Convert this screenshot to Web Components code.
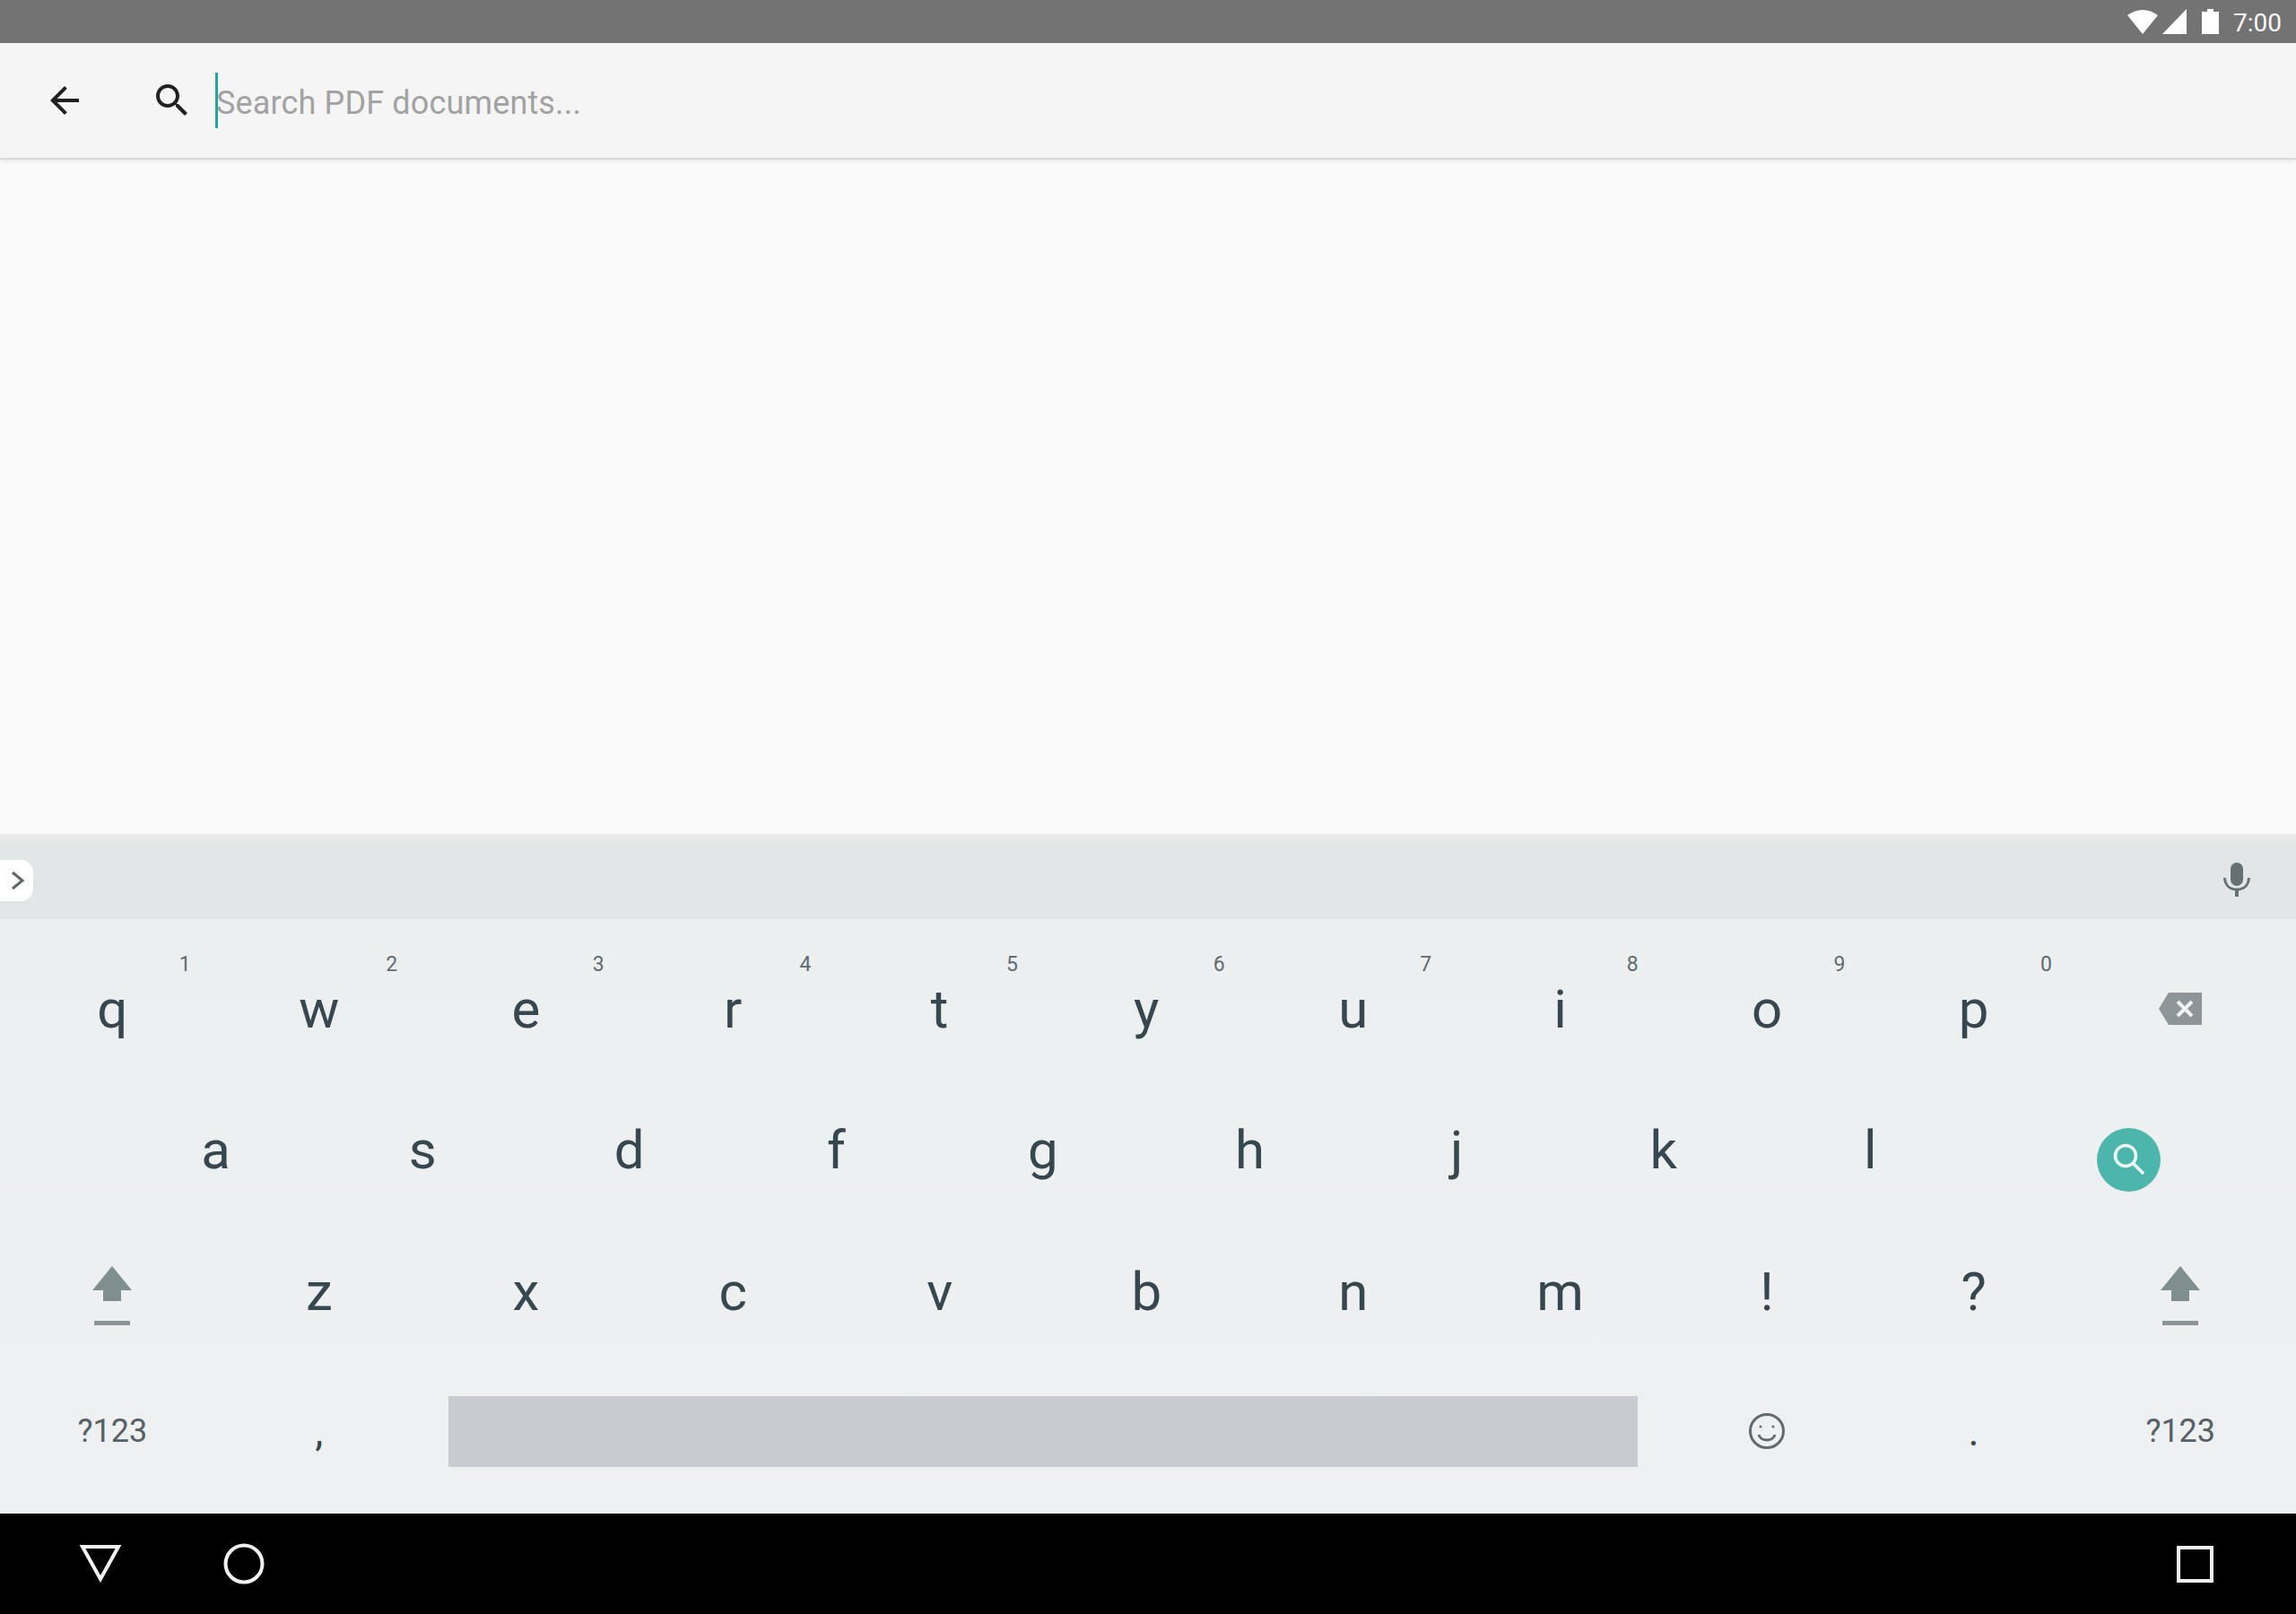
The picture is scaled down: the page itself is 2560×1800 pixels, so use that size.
<!DOCTYPE html>
<html lang="en">
<head>
<meta charset="utf-8">
<title>Search PDF documents</title>
<style>
  html, body { margin: 0; background: #fafafa; }
  body { font-family: Roboto, "Liberation Sans", sans-serif; }
</style>
</head>
<body>
<app-shell>
  <status-bar time="7:00"></status-bar>
  <search-bar placeholder="Search PDF documents..."></search-bar>
  <results-area></results-area>
  <soft-keyboard></soft-keyboard>
  <nav-bar></nav-bar>
</app-shell>

<script>
class AppShell extends HTMLElement {
    constructor() {
        super();
        this.attachShadow({ mode: 'open' });
        this.shadowRoot.innerHTML = `
            <style>
            :host { display: flex; flex-direction: column; width: 2560px; height: 1800px; background: #fafafa; overflow: hidden; }
            </style>
            <slot></slot>
        `;
    }
}

class ResultsArea extends HTMLElement {
    constructor() {
        super();
        this.attachShadow({ mode: 'open' });
        this.shadowRoot.innerHTML = `
            <style>
            :host { display: block; flex: 1; background: #fafafa; }
            </style>
            <slot></slot>
        `;
    }
}

class StatusBar extends HTMLElement {
    constructor() {
        super();
        this.attachShadow({ mode: 'open' });
        this.shadowRoot.innerHTML = `
            <style>
            :host { display: flex; align-items: center; justify-content: flex-end; height: 48px; flex: none; background: #737373; color: #fafafa; padding-right: 16px; box-sizing: border-box; }
            svg { display: block; fill: #fff; }
            .wifi { margin-right: 5px; }
            .signal { margin-right: 17px; }
            .battery { margin-right: 16px; }
            .time { font-size: 28px; line-height: 48px; padding-top: 3px; }
            </style>
            <svg class="wifi" width="34" height="30" viewBox="0 0 34 30"><path d="M0 8Q17 -4 34 8L17 29Z"/></svg>
            <svg class="signal" width="27" height="30" viewBox="0 0 27 30"><path d="M0 29L27 1V29Z"/></svg>
            <svg class="battery" width="19" height="30" viewBox="0 0 19 30"><path d="M0 4H6V1H13V4H19V29H0Z"/></svg>
            <span class="time"></span>
        `;
        this.shadowRoot.querySelector('.time').textContent = this.getAttribute('time');
    }
}

class SearchBar extends HTMLElement {
    constructor() {
        super();
        this.attachShadow({ mode: 'open' });
        this.shadowRoot.innerHTML = `
            <style>
            :host { display: flex; align-items: center; height: 128px; flex: none; background: #f5f5f5; padding-left: 48px; box-sizing: border-box; box-shadow: 0 2px 1px #dadada, 0 5px 4px rgba(0,0,0,.05); position: relative; }
            svg { display: block; fill: #212121; }
            .find { margin-left: 72px; }
            .caret { width: 3px; height: 62px; background: #26a69a; margin-left: 24px; }
            .hint { font-size: 36px; letter-spacing: .15px; color: #a2a2a2; padding-top: 5px; margin-left: -2px; }
            </style>
            <svg width="48" height="48" viewBox="0 0 24 24"><path d="M20 11H7.830l5.590-5.590L12 4l-8 8 8 8 1.410-1.410L7.830 13H20v-2z"/></svg>
            <svg class="find" width="48" height="48" viewBox="0 0 24 24"><path d="M15.500 14h-.79l-.28-.27C15.410 12.590 16 11.110 16 9.500 16 5.910 13.090 3 9.500 3S3 5.910 3 9.500 5.910 16 9.500 16c1.610 0 3.090-.59 4.230-1.570l.27.28v.79l5 4.990L20.490 19l-4.990-5zm-6 0C7.010 14 5 11.990 5 9.500S7.010 5 9.500 5 14 7.010 14 9.500 11.990 14 9.500 14z"/></svg>
            <div class="caret"></div>
            <span class="hint"></span>
        `;
        this.shadowRoot.querySelector('.hint').textContent = this.getAttribute('placeholder');
    }
}

class SuggestionStrip extends HTMLElement {
    constructor() {
        super();
        this.attachShadow({ mode: 'open' });
        this.shadowRoot.innerHTML = `
            <style>
            :host { display: flex; align-items: center; justify-content: space-between; height: 95px; box-sizing: border-box; padding: 14px 51px 0 0; background: linear-gradient(#e9e9e9, #e3e6e6 14px); }
            .more { width: 37px; height: 46px; background: #fff; border-radius: 0 14px 14px 0; display: flex; align-items: center; justify-content: center; margin-top: -5px; padding-left: 2px; box-sizing: border-box; }
            .mic { margin-top: -7px; }
            svg { display: block; }
            </style>
            <div class="more">
                <svg width="16" height="22" viewBox="0 0 16 22"><path d="M2 2L13 11L2 20" fill="none" stroke="#5f6668" stroke-width="3"/></svg>
            </div>
            <svg class="mic" width="30" height="38" viewBox="0 0 30 38">
                <rect x="8" y="0" width="14" height="26" rx="7" fill="#677073"/>
                <path d="M1.500 17C2 26 8 30 15 30S28 26 28.500 17" fill="none" stroke="#677073" stroke-width="3"/>
                <rect x="13" y="29" width="4" height="9" fill="#677073"/>
            </svg>
        `;
    }
}

class KbKey extends HTMLElement {
    static get observedAttributes() { return ['hint']; }
    constructor() {
        super();
        this.attachShadow({ mode: 'open' });
        this.shadowRoot.innerHTML = `
            <style>
            :host { display: flex; align-items: center; justify-content: center; position: relative; height: 156px; box-sizing: border-box; color: #37474f; font-size: 60px; }
            :host([small]) { font-size: 36px; color: #566166; }
            :host([punct]) { font-size: 46px; }
            :host([lift="1"]) { padding-bottom: 5px; }
            :host([lift="2"]) { padding-bottom: 3px; }
            .hint { position: absolute; top: 12px; right: 28px; font-size: 23px; line-height: 28px; color: #5f6b70; }
            </style>
            <slot></slot>
            <span class="hint"></span>
        `;
    }
    attributeChangedCallback(name, oldValue, value) {
        this.shadowRoot.querySelector('.hint').textContent = value;
    }
}

const shiftIcon = `
    <svg style="display:block;margin-top:12px" width="48" height="68" viewBox="0 0 48 68">
        <path d="M24 0L46 27H34V39H14V27H2Z" fill="#7f8e8f"/>
        <rect x="4" y="61" width="40" height="5" fill="#8a9596"/>
    </svg>`;

class SoftKeyboard extends HTMLElement {
    constructor() {
        super();
        this.attachShadow({ mode: 'open' });
        const letters = (s, hints, lift) => s.split('').map((c, i) =>
            `<kb-key${lift ? ` lift="${lift}"` : ''}${hints ? ` hint="${hints[i]}"` : ''}>${c}</kb-key>`).join('');
        this.shadowRoot.innerHTML = `
            <style>
            :host { display: block; height: 758px; flex: none; background: linear-gradient(#ecefef, #eef0f2); }
            .keys { padding: 25px 11px 0 10px; display: grid; grid-template-columns: repeat(22, 115.3px); }
            kb-key { grid-column: span 2; }
            .first { grid-column: 2 / span 2; }
            .enter { grid-column: span 3; }
            .space { grid-column: span 12; }
            .bar { width: 1326px; height: 79px; background: #c8ccd0; }
            .circle { width: 71px; height: 71px; border-radius: 50%; background: #4db6ac; display: flex; align-items: center; justify-content: center; margin-top: 18px; }
            svg { display: block; }
            </style>
            <suggestion-strip></suggestion-strip>
            <div class="keys">
                ${letters('qwertyuiop', '1234567890', 1)}
                <kb-key>
                    <svg style="margin-bottom:6px" width="50" height="36" viewBox="0 0 50 36">
                        <path d="M12 0H49V36H12L1 18Z" fill="#8d9598"/>
                        <path d="M22 10L38 26M38 10L22 26" stroke="#eef0f1" stroke-width="4"/>
                    </svg>
                </kb-key>

                <kb-key class="first" lift="2">a</kb-key>
                ${letters('sdfghjkl', null, 2)}
                <kb-key class="enter">
                    <div class="circle">
                        <svg width="36" height="36" viewBox="0 0 36 36" fill="none" stroke="#eefaf8" stroke-width="3.500">
                            <circle cx="14" cy="14" r="11.500"/>
                            <path d="M22.500 22.500L34 34"/>
                        </svg>
                    </div>
                </kb-key>

                <kb-key>${shiftIcon}</kb-key>
                ${letters('zxcvbnm!?')}
                <kb-key>${shiftIcon}</kb-key>

                <kb-key small>?123</kb-key>
                <kb-key punct>,</kb-key>
                <kb-key class="space"><div class="bar"></div></kb-key>
                <kb-key>
                    <svg width="42" height="42" viewBox="0 0 42 42" fill="none" stroke="#5f6b70" stroke-width="3">
                        <circle cx="21" cy="21" r="18.500"/>
                        <circle cx="14" cy="16" r="1.500" fill="#5f6b70" stroke="none"/>
                        <circle cx="28" cy="16" r="1.500" fill="#5f6b70" stroke="none"/>
                        <path d="M12 25C14 33 28 33 30 25"/>
                    </svg>
                </kb-key>
                <kb-key punct>.</kb-key>
                <kb-key small>?123</kb-key>
            </div>
        `;
    }
}

class NavBar extends HTMLElement {
    constructor() {
        super();
        this.attachShadow({ mode: 'open' });
        this.shadowRoot.innerHTML = `
            <style>
            :host { display: flex; align-items: center; height: 112px; flex: none; background: #000; padding: 0 92px 0 88px; box-sizing: border-box; }
            svg { display: block; fill: none; stroke: #f2f2f2; stroke-width: 4; }
            .home { margin-left: 113px; }
            .recent { margin-left: auto; }
            </style>
            <svg width="48" height="42" viewBox="0 0 48 42"><path d="M4 2H44L24 38Z"/></svg>
            <svg class="home" width="46" height="46" viewBox="0 0 46 46"><circle cx="23" cy="23" r="20.500"/></svg>
            <svg class="recent" width="41" height="41" viewBox="0 0 41 41"><rect x="2" y="2" width="37" height="37"/></svg>
        `;
    }
}

customElements.define('app-shell', AppShell);
customElements.define('results-area', ResultsArea);
customElements.define('status-bar', StatusBar);
customElements.define('search-bar', SearchBar);
customElements.define('suggestion-strip', SuggestionStrip);
customElements.define('kb-key', KbKey);
customElements.define('soft-keyboard', SoftKeyboard);
customElements.define('nav-bar', NavBar);
</script>
</body>
</html>
